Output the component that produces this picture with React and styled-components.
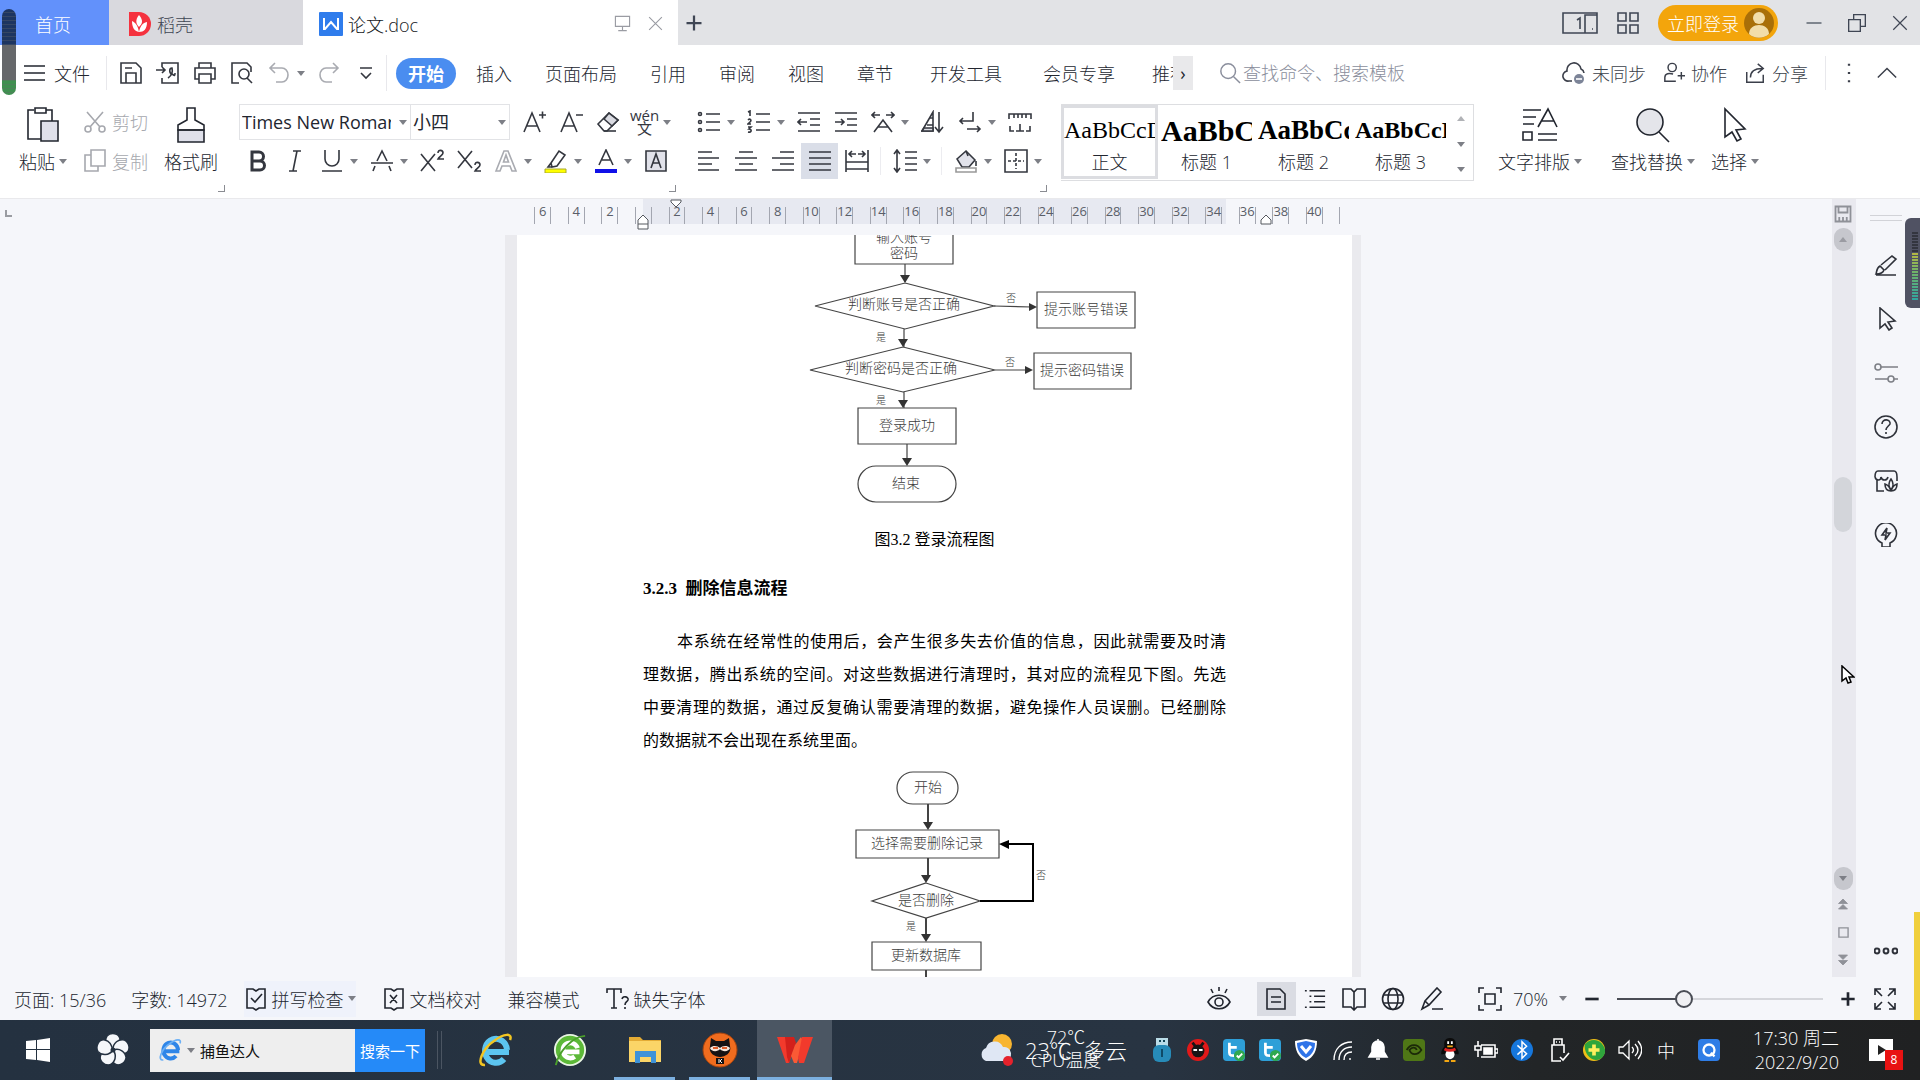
import React, { useState } from "react";
import styled, { createGlobalStyle } from "styled-components";

const GlobalStyle = createGlobalStyle`
  * {
    box-sizing: border-box;
  }
  body {
    margin: 0;
    font-family: "Open Sans", "Noto Sans CJK SC", sans-serif;
    font-size: 18px;
    font-weight: 300;
    color: #22262f;
  }
  button, input, select {
    font: inherit;
    color: inherit;
    border: 0;
    padding: 0;
    margin: 0;
    background: none;
    outline: none;
  }
  svg {
    display: block;
    flex: none;
  }
`;

const Desktop = styled.div`
  position: relative;
  display: flex;
  flex-direction: column;
  height: 100vh;
  overflow: hidden;
  background: #f5f6fa;
  white-space: nowrap;
`;

/* ---------- icons ---------- */

const Drawing = styled.svg`
  fill: none;
  stroke: currentColor;
  stroke-width: ${(p) => p.$weight || 1.6};
`;

const Icon = ({ size = 24, weight, children }) => (
  <Drawing
    width={size}
    height={size}
    viewBox="0 0 24 24"
    $weight={weight}
    aria-hidden="true"
  >
    {children}
  </Drawing>
);

const CaretSvg = styled.svg`
  fill: #7d7f86;
`;

const Caret = () => (
  <CaretSvg width="8" height="5" viewBox="0 0 8 5" aria-hidden="true">
    <path d="M0 0h8L4 5z" />
  </CaretSvg>
);

const icons = {
  save: <path d="M2 2h15l5 5v15H2zM7 22V12h10v10M6 7h7" />,
  exportPdf: (
    <path d="M6 6V2h16v20H6v-5M0 9h9M6 6l3 3-3 3M12 17c3-2 5-6 4-10-3 0-3 5 0 6 3 2 3 2 3-1" />
  ),
  print: <path d="M6 7V2h12v5M6 18H2V7h20v11h-4M6 13h12v9H6z" />,
  preview: (
    <>
      <path d="M9 22H2V2h15l4 4v5" />
      <circle cx="14" cy="13" r="5" />
      <path d="M17 17l5 5" />
    </>
  ),
  undo: <path d="M8 2L3 7l5 5M3 7h12a6 7 0 0 1 0 14H9" />,
  redo: <path d="M16 2l5 5-5 5M21 7H9a6 7 0 0 0 0 14h6" />,
  more: <path d="M6 7h12M7 12l5 5 5-5" />,
  cut: (
    <>
      <circle cx="5" cy="19" r="3" />
      <circle cx="19" cy="19" r="3" />
      <path d="M4 2l13 15M20 2L7 17" />
    </>
  ),
  copy: <path d="M8 1h14v16H8zM8 6H2v16h13v-5" />,
  grow: <path d="M2 22L10 3l8 19M5 16h10M17 5h7M20.500 1.500v7" />,
  shrink: <path d="M2 22L10 3l8 19M5 16h10M17 5h7" />,
  eraser: (
    <>
      <path d="M2 14L13 3l9 7-11 11H8z" />
      <path d="M8 9l8 7 6-6-9-7z" fill="#dadbe2" />
      <path d="M8 21h12" />
    </>
  ),
  bold: (
    <path
      d="M6 3h7a4.500 4.500 0 0 1 0 9H6zM6 12h8a4.500 4.500 0 0 1 0 9H6z"
      strokeWidth="3"
    />
  ),
  italic: <path d="M10 2h8M6 22h8M14 2l-4 20" />,
  underline: <path d="M5 1v9a7 7 0 0 0 14 0V1M2 22h20" />,
  strike: <path d="M7 12l5-10 5 10M1 14h22M5 17l-2 5M19 17l2 5" />,
  sup: (
    <path d="M1 5l14 17M15 5L1 22M18 4c0-4 5-3 5 0 0 2-4 4-5 6h6" />
  ),
  sub: (
    <path d="M1 2l14 17M15 2L1 19M18 16c0-4 5-3 5 0 0 2-4 4-5 6h6" />
  ),
  effect: <path d="M2 22L10 2h4l8 20h-4l-2-5H8l-2 5zM9.500 13h5L12 6z" />,
  highlight: (
    <>
      <path d="M7 14l8-12 6 4-8 11-5 1zM7 14l-3 4h4" />
      <path d="M1 20h21v4H1z" fill="#ffff00" stroke="#a9a92c" strokeWidth="1" />
    </>
  ),
  fontColor: (
    <>
      <path d="M5 16l7-15 7 15M8 11h8" />
      <path d="M1 20h22v4H1z" fill="#1010e8" stroke="none" />
    </>
  ),
  shade: (
    <>
      <path d="M2 2h20v20H2z" fill="#e1e2ea" />
      <path d="M7 19l5-14 5 14M9 14h6" />
    </>
  ),
  bullets: (
    <>
      <circle cx="3" cy="4" r="1.500" />
      <circle cx="3" cy="12" r="1.500" />
      <circle cx="3" cy="20" r="1.500" />
      <path d="M9 4h14M9 12h14M9 20h14" />
    </>
  ),
  numbers: (
    <path d="M9 4h14M9 12h14M9 20h14M1 2l2-1v5M1 10c2-2 4 0 2 2l-2 2h3M1 17h3l-2 2c3 0 3 4-1 3" />
  ),
  outdent: <path d="M1 3h22M13 9h10M13 15h10M1 21h22M1 12h9M4 9l-3 3 3 3" />,
  indent: <path d="M1 3h22M13 9h10M13 15h10M1 21h22M1 12h9M7 9l3 3-3 3" />,
  scale: (
    <path d="M3 22l9-12 9 12M7 17h10M1 5h8M4 2L1 5l3 3M23 5h-8M20 2l3 3-3 3" />
  ),
  sort: (
    <>
      <path d="M1 21L12 2v19z" />
      <path d="M6 15h6M3 18h9v3H1z" fill="#dadbe2" />
      <path d="M18 2v19M14 17l4 5 4-5M9 8h3" />
    </>
  ),
  wrap: <path d="M15 2v9H2M5 8l-3 3 3 3M9 19h13M19 16l3 3-3 3" />,
  tabs: <path d="M1 9V4h22v5M6 4v4M10 4v4M14 4v4M18 4v4M2 16v5h4M22 16v5h-4M12 14v7M8 21h8" />,
  left: <path d="M1 3h14M1 9h21M1 15h14M1 21h21" />,
  center: <path d="M5 3h14M1 9h22M5 15h14M1 21h22" />,
  right: <path d="M9 3h14M1 9h22M9 15h14M1 21h22" />,
  justify: <path d="M1 3h22M1 9h22M1 15h22M1 21h22" />,
  distribute: (
    <path d="M1 1v22M23 1v22M4 5h7M7 2L4 5l3 3M20 5h-7M17 2l3 3-3 3M1 13h22M1 20h22" />
  ),
  spacing: <path d="M4 1v22M1 5l3-4 3 4M1 19l3 4 3-4M12 3h12M12 9h12M12 15h12M12 21h12" />,
  fill: (
    <>
      <path d="M3 10l9-8 9 9-6 7H8z" fill="#e1e2ea" />
      <path d="M12 2l2 5M22 12v5" />
      <path d="M2 19h20v4H2z" stroke="#999" />
    </>
  ),
  borders: (
    <>
      <path d="M1 1h22v22H1z" />
      <path d="M12 4v16M4 12h16" strokeDasharray="3 2" />
    </>
  ),
  search: (
    <>
      <circle cx="10" cy="10" r="8" />
      <path d="M16 16l7 7" />
    </>
  ),
  cloud: (
    <>
      <path d="M10 20H7a5 5 0 0 1-2-10 7 7 0 0 1 14-2 5 5 0 0 1 3 4" />
      <circle cx="17" cy="18" r="5" fill="#7c8498" stroke="none" />
      <path d="M14 18h6" stroke="#fff" />
    </>
  ),
  people: (
    <>
      <circle cx="10" cy="6" r="4.500" />
      <path d="M14 21H2v-4c0-5 5-5 9-4M16 15h8M20 11v8" />
    </>
  ),
  share: <path d="M3 11v11h18v-8M7 17c0-7 4-10 13-10M15 2l6 5-6 5" />,
  brush: (
    <path d="M2 22h20M2 21c1-2 0-6 4-8l4 4c-1 3-4 4-8 4zM7 12L18 3l4 3-11 11" />
  ),
  pointer: <path d="M6 1v20l5-4 4 6 3-2-4-6 7-1z" />,
  sliders: (
    <>
      <circle cx="4" cy="6" r="3" />
      <circle cx="17" cy="18" r="3" />
      <path d="M7 6h17M1 18h13M20 18h4" />
    </>
  ),
  help: (
    <>
      <circle cx="12" cy="12" r="11" />
      <path d="M8 9c0-6 9-5 8 0-1 2-4 3-4 6M12 17v2" />
    </>
  ),
  shop: (
    <path d="M3 10v12h7M1 8c0-3 1-6 3-6h16c2 0 3 3 3 6v4M1 8c1 4 6 4 6 0 1 4 6 4 7 0M17 10c3 4 3 7 0 11-3-4-3-7 0-11zM11 15c4 1 5 4 6 7-4 0-6-3-6-7zM23 15c-4 1-5 4-6 7 4 0 6-3 6-7z" />
  ),
  idea: (
    <path d="M8 24v-4a10.500 10.500 0 1 1 8 0v4zM13 5l-5 7h4l-1 5 5-7h-4z" />
  ),
  spell: <path d="M3 2h6l3 2 3-2h6v19h-6l-3 2-3-2H3zM7 11l4 4 7-8" />,
  proof: <path d="M3 2h6l3 2 3-2h6v19h-6l-3 2-3-2H3zM8 8l7 8M15 8l-7 8" />,
  missing: (
    <path d="M1 6V2h14v4M8 2v19M5 21h6M16 12c1-4 7-2 6 1-1 2-3 2-3 5M19 20v2" />
  ),
  eye: (
    <>
      <path d="M1 15c5-9 17-9 22 0-5 9-17 9-22 0z" />
      <circle cx="12" cy="15" r="4" />
      <path d="M12 0v4M4 2l2 4M20 2l-2 4" />
    </>
  ),
  page: <path d="M3 2h13l5 5v15H3zM7 10h10M7 15h10" />,
  outline: (
    <path d="M6 3h17M11 9h12M11 15h12M6 21h17M1 3h2M6 9h2M6 15h2M1 21h2" />
  ),
  book: <path d="M1 2h8l3 3 3-3h8v18h-8l-3 3-3-3H1zM12 5v18" />,
  globe: (
    <>
      <circle cx="12" cy="12" r="10.500" />
      <ellipse cx="12" cy="12" rx="5" ry="10.500" />
      <path d="M2 8h20M2 16h20" />
    </>
  ),
  pen: <path d="M2 22l3-8L17 1l4 4L9 18zM5 14l4 4M12 22h11" />,
  fit: <path d="M7 7h10v10H7zM6 1H1v5M18 1h5v5M6 23H1v-5M18 23h5v-5" />,
  full: (
    <path d="M9 9L2 2M2 8V2h6M15 9l7-7M16 2h6v6M9 15l-7 7M2 16v6h6M15 15l7 7M22 16v6h-6" />
  ),
  minus: <path d="M2 12h20" strokeWidth="4" />,
  plus: <path d="M2 12h20M12 2v20" strokeWidth="4" />,
  close: <path d="M3 3l18 18M21 3L3 21" />,
  restore: <path d="M2 8h14v14H2zM8 8V2h14v14h-6" />,
  line: <path d="M2 12h20" />,
  apps: <path d="M2 2h8v8H2zM14 2h8v8h-8zM2 14h8v8H2zM14 14h8v8h-8z" />,
  monitor: <path d="M2 2h20v14H2zM12 16v6M6 22h12" />,
  up: <path d="M2 17L12 7l10 10" />,
  dots: <path d="M12 2v2M12 11v2M12 20v2" strokeWidth="2.500" />,
};

/* ---------- title bar ---------- */

const TitleBar = styled.header`
  display: flex;
  align-items: center;
  height: 45px;
  flex: none;
  background: #e2e3e6;
  color: #3f4654;
`;

const Tab = styled.button`
  display: flex;
  align-items: center;
  gap: 5px;
  height: 45px;
  width: ${(p) => p.$width}px;
  padding: 2px 14px 0 ${(p) => p.$indent || 16}px;
  background: ${(p) => p.$bg};
  color: ${(p) => p.$color};
`;

const TabTools = styled.span`
  display: flex;
  gap: 16px;
  margin-left: auto;
  color: #9a9ca3;
`;

const AddTab = styled.button`
  width: 32px;
  display: grid;
  place-items: center;
`;

const WindowTools = styled.div`
  display: flex;
  align-items: center;
  gap: 18px;
  margin-left: auto;
  padding-right: 11px;
`;

const WindowButtons = styled.div`
  display: flex;
  align-items: center;
  gap: 24px;
  padding-left: 9px;
`;

const PlainButton = styled.button`
  display: flex;
  align-items: center;
  gap: ${(p) => p.$gap || 6}px;
`;

const Login = styled.button`
  display: flex;
  align-items: center;
  gap: 5px;
  height: 36px;
  padding: 0 4px 0 9px;
  border-radius: 18px;
  background: #f3a50c;
  color: #fff;
`;

/* ---------- menu row ---------- */

const MenuBar = styled.nav`
  display: flex;
  align-items: center;
  height: 53px;
  flex: none;
  padding: 3px 22px 0 24px;
  background: #fff;
`;

const FileButton = styled(PlainButton)`
  width: 83px;
  height: 34px;
  gap: 9px;
  border-right: 1px solid #e8e8ec;
`;

const QuickBar = styled.div`
  display: flex;
  padding: 0 2px 0 5px;
  border-right: 1px solid #e8e8ec;
`;

const ToolButton = styled.button`
  display: flex;
  align-items: center;
  width: ${(p) => (p.$caret ? 50 : 37)}px;
  height: 36px;
  color: ${(p) => (p.$muted ? "#a9abb1" : "#34373f")};
  background: ${(p) => (p.$on ? "#dadee8" : "none")};
`;

const ToolFace = styled.span`
  display: flex;
  justify-content: center;
  width: 37px;
`;

const MenuList = styled.div`
  display: flex;
  align-items: center;
  gap: 33px;
  margin-left: 20px;
`;

const MenuItem = styled.button`
  padding: 0 ${(p) => (p.$wide ? 4 : 0)}px;
`;

const ActiveMenu = styled.button`
  width: 60px;
  height: 31px;
  margin-left: 9px;
  border-radius: 16px;
  background: #4a8df0;
  color: #fff;
  font-weight: 700;
`;

const CutMenu = styled.button`
  width: 21px;
  overflow: hidden;
  text-align: left;
`;

const ScrollMenu = styled.button`
  width: 20px;
  height: 34px;
  background: #e9e9eb;
  font-weight: 400;
  line-height: 30px;
`;

const Finder = styled.label`
  display: flex;
  align-items: center;
  gap: 2px;
  flex: 1;
  margin-left: 26px;
  color: #8a8e9c;

  input {
    flex: 1;
    min-width: 0;
  }
  input::placeholder {
    color: #8a8e9c;
    opacity: 1;
  }
`;

const MenuRight = styled.div`
  display: flex;
  align-items: center;
  gap: 17px;
  color: #3b3f4a;
`;

const MenuEnd = styled.div`
  display: flex;
  align-items: center;
  gap: 16px;
  height: 34px;
  padding-left: 12px;
  border-left: 1px solid #e8e8ec;
`;

/* ---------- ribbon ---------- */

const Ribbon = styled.section`
  display: flex;
  align-items: flex-start;
  height: 101px;
  flex: none;
  padding: 6px 0 0 19px;
  gap: 14px;
  background: #fff;
  border-bottom: 1px solid #e9e9ec;
`;

const Group = styled.div`
  display: flex;
  flex-direction: column;
  gap: 3px;
`;

const ToolRow = styled.div`
  display: flex;
  align-items: center;
  height: 36px;
`;

const Corner = styled.i`
  align-self: flex-end;
  width: 7px;
  height: 7px;
  margin-top: 3px;
  border: solid #8a8c92;
  border-width: 0 1px 1px 0;
`;

const Separator = styled.i`
  width: 1px;
  height: 28px;
  margin: 0 5px;
  background: #ececf0;
`;

const Clipboard = styled.div`
  display: flex;
  gap: 16px;
  padding-right: 7px;
`;

const BigButton = styled.button`
  display: flex;
  flex-direction: column;
  align-items: center;
  height: 75px;
  padding-top: 3px;
`;

const BigLabel = styled.span`
  display: flex;
  align-items: center;
  gap: 4px;
  height: 36px;
`;

const MutedButton = styled.button`
  display: flex;
  align-items: center;
  gap: 5px;
  height: 36px;
  color: #a6a8ae;
`;

const FontBox = styled.label`
  display: flex;
  align-items: center;
  gap: 8px;
  width: ${(p) => p.$width}px;
  height: 36px;
  padding: 0 3px 0 2px;
  border: solid #e2e3e6;
  border-width: 1px 1px 1px 0;

  &:first-child {
    border-left-width: 1px;
  }
  select {
    flex: 1;
    min-width: 0;
    height: 34px;
    appearance: none;
    overflow: hidden;
    font-weight: 400;
  }
`;

const FontTools = styled.div`
  display: flex;
  margin-left: 5px;
`;

const Pinyin = styled.span`
  display: flex;
  flex-direction: column;
  align-items: center;
  font-size: 15px;
  line-height: 13px;
  font-weight: 400;
`;

const StyleGallery = styled.div`
  display: flex;
  height: 77px;
  border: solid #dddee1;
  border-width: 1px 1px 1px 0;
`;

const StyleCard = styled.button`
  width: 97px;
  height: 74px;
  overflow: hidden;
  border: ${(p) => (p.$on ? "3px solid #dcdde1" : "0")};
  padding: ${(p) => (p.$on ? 0 : "3px 3px")};
`;

const Sample = styled.span`
  display: block;
  overflow: hidden;
  height: 40px;
  line-height: 43px;
  text-align: left;
  color: #000;
  font-family: "Liberation Serif", serif;
  font-size: ${(p) => p.$size}px;
  font-weight: ${(p) => (p.$bold ? 700 : 400)};
`;

const StyleName = styled.span`
  display: block;
  line-height: 27px;
`;

const GalleryArrows = styled.div`
  display: flex;
  flex-direction: column;
  justify-content: space-between;
  align-items: center;
  width: 24px;
  padding: 11px 0 8px;
`;

const Flip = styled.span`
  display: block;
  transform: rotate(180deg);
  opacity: 0.6;
`;

const RibbonEnd = styled.div`
  display: flex;
  gap: ${(p) => p.$gap}px;
  padding-left: ${(p) => p.$inset || 0}px;
`;

/* ---------- workspace ---------- */

const Workspace = styled.main`
  display: flex;
  flex: 1;
  min-height: 0;
`;

const Canvas = styled.div`
  display: flex;
  flex-direction: column;
  align-items: center;
  flex: 1;
  min-width: 0;
  padding-left: 37px;
  position: relative;
`;

const TabMark = styled.i`
  position: absolute;
  left: 5px;
  top: 11px;
  width: 7px;
  height: 7px;
  border: solid #9a9ca2;
  border-width: 0 0 2px 2px;
`;

const Ruler = styled.div`
  position: relative;
  display: flex;
  align-items: flex-end;
  width: 835px;
  height: 25px;
  margin-bottom: 11px;
  padding: 0 12px 0 9px;
  flex: none;
  background: linear-gradient(
    90deg,
    transparent 126px,
    #e7e9f1 126px,
    #e7e9f1 709px,
    transparent 709px
  );
`;

const RulerCell = styled.span`
  display: flex;
  justify-content: center;
  flex: 1;
  height: 17px;

  span {
    display: flex;
    justify-content: center;
    width: 50%;
    border: solid #a3a6b0;
    border-width: 0 1px;
    font-size: 13px;
    line-height: 9px;
    font-weight: 400;
    color: #5a5e68;
  }
`;

const RulerEnd = styled.i`
  width: 9px;
  height: 17px;
  border-right: 1px solid #a3a6b0;
`;

const RulerMark = styled.svg`
  position: absolute;
  left: ${(p) => p.$left}px;
  top: ${(p) => p.$top}px;
  fill: #fff;
  stroke: #55585f;
`;

const Page = styled.article`
  flex: 1;
  min-height: 0;
  width: 835px;
  padding: 0 126px;
  overflow: hidden;
  background: #fff;
  box-shadow: -12px 0 0 #eaeaee, 9px 0 0 #eaeaee;
  color: #000;
  font-family: "Liberation Serif", "Noto Sans CJK SC", serif;
  font-size: 16px;
  font-weight: 400;
`;

const Flow = styled.svg`
  fill: none;
  stroke: #444;
  stroke-width: 1.2;

  text {
    fill: #3c3c3c;
    stroke: none;
    font-size: 14px;
    font-weight: 300;
    text-anchor: middle;
  }
  .small {
    font-size: 10px;
  }
  .head {
    fill: #333;
    stroke: none;
  }
  .loop {
    stroke: #000;
    stroke-width: 2;
  }
`;

const Caption = styled.p`
  margin: 0;
  text-align: center;
  line-height: 40px;
`;

const Heading = styled.h3`
  margin: 9px 0 16px;
  font-size: 17px;
  font-weight: 700;
  line-height: 40px;
`;

const Paragraph = styled.p`
  margin: 0 0 8px;
  line-height: 33px;
`;

const Line = styled.span`
  display: block;
  padding-left: ${(p) => (p.$first ? 34 : 0)}px;
  text-align: justify;
  text-align-last: ${(p) => (p.$last ? "left" : "justify")};
`;

const ScrollBar = styled.div`
  display: flex;
  flex-direction: column;
  align-items: center;
  width: 24px;
  padding: 1px 2px 3px 0;
  background: #e9e9ef;
`;

const Track = styled.div`
  flex: 1;
  width: 18px;
  padding-top: 226px;
`;

const Thumb = styled.div`
  height: 55px;
  border-radius: 9px;
  background: #d3d5da;
`;

const Knob = styled.button`
  display: grid;
  place-items: center;
  width: 19px;
  height: ${(p) => (p.$round ? 23 : 28)}px;
  border-radius: 9px;
  color: #8f9198;
  background: ${(p) => (p.$round ? "#c6c7cd" : "none")};
`;

const SideRail = styled.aside`
  display: flex;
  flex-direction: column;
  align-items: center;
  width: 64px;
  padding: 16px 4px 14px 0;
  color: #2f323a;
`;

const Grip = styled.i`
  width: 32px;
  height: 6px;
  margin-bottom: 32px;
  border: solid #d2d3d8;
  border-width: 1px 0;
`;

const RailButton = styled.button`
  height: 24px;
  margin-bottom: 30px;
  opacity: ${(p) => (p.$muted ? 0.6 : 1)};

  &:last-child {
    margin: auto 0 0;
  }
`;

/* ---------- status bar ---------- */

const StatusBar = styled.footer`
  display: flex;
  align-items: center;
  height: 43px;
  flex: none;
  padding: 0 23px 0 14px;
  background: #f5f6fa;
`;

const StatusLeft = styled.div`
  display: flex;
  align-items: center;
  gap: ${(p) => p.$gap}px;
`;

const StatusButton = styled(PlainButton)`
  height: 36px;
  gap: 4px;
  background: ${(p) => (p.$tinted ? "#eff2fb" : "none")};
`;

const StatusViews = styled.div`
  display: flex;
  margin-left: auto;
`;

const ViewButton = styled.button`
  display: grid;
  place-items: center;
  width: ${(p) => (p.$wide ? 76 : 39)}px;
  height: 34px;
  background: ${(p) => (p.$on ? "#dadce3" : "none")};
`;

const Zoom = styled.div`
  display: flex;
  align-items: center;
  gap: 17px;
  margin-left: 26px;

  input {
    width: 206px;
    height: 20px;
    appearance: none;
    background: linear-gradient(90deg, #4a4d55 33%, #d5d6db 33%) center / 100%
      2px no-repeat;
  }
  input::-webkit-slider-thumb {
    appearance: none;
    width: 18px;
    height: 18px;
    border: 2px solid #4a4d55;
    border-radius: 50%;
    background: #f0f0f3;
  }
`;

/* ---------- taskbar ---------- */

const TaskBar = styled.footer`
  display: flex;
  align-items: center;
  height: 60px;
  flex: none;
  background: linear-gradient(90deg, #243140 0%, #283442 60%, #222527 80%, #202122 100%);
  color: #fff;
`;

const AppButton = styled.button`
  display: grid;
  place-items: center;
  width: 75px;
  height: 60px;
  background: ${(p) => (p.$on ? "#4b5663" : "none")};

  &::after {
    content: "";
    grid-area: 1 / 1;
    align-self: end;
    width: ${(p) => (p.$on ? 75 : 61)}px;
    height: 3px;
    background: ${(p) => (p.$open ? "#7cb0e0" : "none")};
  }
  svg {
    grid-area: 1 / 1;
  }
`;

const TaskSearch = styled.form`
  display: flex;
  align-items: center;
  width: 275px;
  height: 43px;
  margin: 0 20px 0 0;
  background: #eee;
  color: #111;
  font-size: 15px;
  font-weight: 400;

  label {
    display: flex;
    align-items: center;
    flex: 1;
    min-width: 0;
    gap: 5px;
    padding-left: 8px;
  }
  input {
    flex: 1;
    min-width: 0;
  }
  button {
    width: 70px;
    height: 43px;
    background: #258af8;
    color: #fff;
  }
`;

const AppGrip = styled.i`
  width: 5px;
  height: 38px;
  margin-left: -8px;
  margin-right: 15px;
  border: solid #4b5562;
  border-width: 0 1px;
`;

const Weather = styled.div`
  display: flex;
  align-items: center;
  gap: 12px;
  width: 165px;
  margin-left: auto;
  font-size: 22px;
`;

const Readout = styled.div`
  position: relative;
  line-height: 60px;
`;

const CpuTemp = styled.div`
  position: absolute;
  inset: 6px 20px 0 0;
  text-align: center;
  font-size: 18px;
  line-height: 23px;
`;

const Tray = styled.div`
  display: flex;
  align-items: center;
`;

const TrayItem = styled.button`
  display: grid;
  place-items: center;
  width: 36px;
  height: 40px;

  &:last-child {
    margin-left: 7px;
  }
`;

const Clock = styled.div`
  margin: 0 30px 0 26px;
  text-align: right;
  line-height: 24px;
`;

const Notice = styled.button`
  position: relative;
  width: 34px;
  height: 44px;
  margin-right: 17px;

  b {
    position: absolute;
    right: 0;
    bottom: 2px;
    width: 18px;
    height: 20px;
    background: #e81212;
    font-size: 12px;
    font-weight: 400;
    line-height: 20px;
  }
`;

/* ---------- floating pieces ---------- */

const LeftMeter = styled.div`
  position: absolute;
  left: 2px;
  top: 9px;
  width: 14px;
  height: 86px;
  border-radius: 7px;
  background: repeating-linear-gradient(transparent 0 3px, #66686b55 3px 4px),
    linear-gradient(#1d3561 42%, #66686b 42%, #66686b 82%, #3f9050 82%);
`;

const RightMeter = styled.div`
  position: absolute;
  right: 0;
  top: 218px;
  width: 15px;
  height: 90px;
  padding: 14px 0 0 7px;
  border-radius: 6px 0 0 6px;
  background: #505263;

  i {
    display: block;
    width: 6px;
    height: 68px;
    background: repeating-linear-gradient(transparent 0 2px, #505263 2px 3px),
      linear-gradient(#33353f 30%, #b5b843 31%, #6db36a 60%, #31a5a0);
  }
`;

const YellowEdge = styled.div`
  position: absolute;
  right: 0;
  bottom: 60px;
  width: 6px;
  height: 108px;
  background: #f0cf3c;
`;

const MousePointer = styled.svg`
  position: absolute;
  right: 65px;
  top: 665px;
`;

/* ---------- parts ---------- */

const Tool = ({ name, label, caret, muted, on, children }) => (
  <ToolButton $caret={caret} $muted={muted} $on={on} aria-label={label}>
    <ToolFace>{children || <Icon>{icons[name]}</Icon>}</ToolFace>
    {caret && <Caret />}
  </ToolButton>
);

const DownHead = ({ x, y }) => (
  <path className="head" d={`M${x - 5} ${y - 8}h10l-5 8z`} />
);

const LoginFlow = () => (
  <Flow width="583" height="285" viewBox="643 235 583 285">
    <path d="M855 228v36h98v-36M905 264v18M905 283l89 23-89 23-90-23zM904 329v18M903 347l92 23-92 22-93-22zM904 392v16" />
    <path d="M994 306l38 1M995 370h34M1037 292h98v36h-98zM1034 353h97v36h-97zM858 408h98v36h-98zM907 444v18" />
    <rect x="858" y="466" width="98" height="36" rx="18" />
    <DownHead x={905} y={283} />
    <DownHead x={903} y={347} />
    <DownHead x={903} y={408} />
    <DownHead x={907} y={466} />
    <path className="head" d="M1029 303l8 4-8 4zM1025 366l8 4-8 4z" />
    <text x="904" y="242">输入账号</text>
    <text x="904" y="258">密码</text>
    <text x="904" y="309">判断账号是否正确</text>
    <text x="901" y="373">判断密码是否正确</text>
    <text x="1086" y="314">提示账号错误</text>
    <text x="1082" y="375">提示密码错误</text>
    <text x="907" y="430">登录成功</text>
    <text x="906" y="488">结束</text>
    <text className="small" x="1011" y="302">否</text>
    <text className="small" x="1010" y="366">否</text>
    <text className="small" x="881" y="341">是</text>
    <text className="small" x="881" y="404">是</text>
  </Flow>
);

const DeleteFlow = () => (
  <Flow width="583" height="212" viewBox="643 765 583 212">
    <rect x="897" y="772" width="61" height="32" rx="16" />
    <path d="M856 830h143v28H856zM926 883l54 18-54 17-54-17zM872 942h109v28H872z" />
    <path d="M928 804v20M928 858v20M926 918v20M926 970v10" strokeWidth="2" />
    <path className="loop" d="M980 901h53v-57h-27" />
    <path d="M1009 840l-10 4 10 5z" fill="#000" stroke="none" />
    <DownHead x={928} y={830} />
    <DownHead x={926} y={883} />
    <DownHead x={926} y={942} />
    <text x="928" y="792">开始</text>
    <text x="927" y="848">选择需要删除记录</text>
    <text x="926" y="905">是否删除</text>
    <text x="926" y="960">更新数据库</text>
    <text className="small" x="1041" y="879">否</text>
    <text className="small" x="911" y="930">是</text>
  </Flow>
);

const PasteIcon = () => (
  <Drawing width="34" height="36" viewBox="0 0 34 36">
    <path d="M8 3H2v29h13M20 3h6v11M9 1h11v5H9z" />
    <path d="M15 14h17v20H15z" fill="#dfe0ea" />
  </Drawing>
);

const BrushIcon = () => (
  <Drawing width="30" height="36" viewBox="0 0 30 36">
    <path d="M2 23h26v12H2z" fill="#dfe0ea" />
    <path d="M11 1h8v12l9 5v5H2v-5l9-5z" />
  </Drawing>
);

const TypesetIcon = () => (
  <Drawing width="36" height="36" viewBox="0 0 36 36">
    <path d="M1 3h18M1 10h13M1 17h11M16 20L26 2l9 18M20 14h12M16 27h19M16 33h19M1 25h9v8H1z" />
  </Drawing>
);

const LensIcon = () => (
  <Drawing width="36" height="36" viewBox="0 0 36 36">
    <circle cx="15" cy="15" r="13" fill="#e4e5ea" />
    <path d="M24 25l10 10" />
  </Drawing>
);

const SelectIcon = () => (
  <Drawing width="26" height="36" viewBox="0 0 26 36">
    <path d="M3 2v28l7-5 5 9 4-2-5-9 9-1z" />
  </Drawing>
);

const EdgeLogo = ({ size, main, ring }) => (
  <svg width={size} height={size} viewBox="0 0 36 36" aria-hidden="true">
    <path
      d="M32 20H11M30 18a11 12 0 1 0-3 9"
      fill="none"
      stroke={main}
      strokeWidth="6"
    />
    <path
      d="M8 33C-2 34 6 16 17 9 27 1 36 1 33 8"
      fill="none"
      stroke={ring}
      strokeWidth="2.500"
    />
  </svg>
);

const PetalLogo = () => (
  <svg width="34" height="36" viewBox="-17 -18 34 36" aria-hidden="true">
    {[0, 72, 144, 216, 288].map((turn) => (
      <g key={turn} transform={`rotate(${turn})`}>
        <path
          d="M0 0c-7-2-9-9-6-14 4-4 12-3 13 3 1 5-3 8-7 11z"
          fill="#f5f7fa"
          stroke="#243140"
          strokeWidth="1.500"
        />
      </g>
    ))}
    <circle r="2.500" fill="#243140" />
  </svg>
);

const Tile = ({ bg, round, children }) => (
  <svg width="22" height="24" viewBox="0 0 24 24" aria-hidden="true">
    <rect width="24" height="24" rx={round ? 12 : 4} fill={bg} />
    {children}
  </svg>
);

const tray = [
  ["USB", <svg width="22" height="26" viewBox="0 0 22 26"><path d="M5 1h12v8H5z" fill="#b9dce8" /><path d="M8 4h2M12 4h2" stroke="#145" strokeWidth="2" /><rect x="2" y="8" width="18" height="17" rx="6" fill="#278bb8" /><path d="M11 12v8" stroke="#0f4a66" strokeWidth="2" /></svg>],
  ["录屏", <Tile bg="#e11919" round><circle cx="12" cy="13" r="7" fill="#181515" /><path d="M6 4l4 5M18 4l-4 5" stroke="#181515" strokeWidth="3" /><path d="M7 12h4M13 12h4" stroke="#fff" strokeWidth="2" /></Tile>],
  ["同步", <Tile bg="#2e9fd8"><path d="M7 4v11c0 3 2 3 5 3M7 9h8" stroke="#fff" strokeWidth="3" fill="none" /><circle cx="18" cy="18" r="6" fill="#2fa84f" /><path d="M15 18l2 2 4-4" stroke="#fff" strokeWidth="2" fill="none" /></Tile>],
  ["备份", <Tile bg="#2e9fd8"><path d="M7 4v11c0 3 2 3 5 3M7 9h8" stroke="#fff" strokeWidth="3" fill="none" /><circle cx="18" cy="18" r="6" fill="#2fa84f" /><path d="M15 18l2 2 4-4" stroke="#fff" strokeWidth="2" fill="none" /></Tile>],
  ["卫士", <svg width="24" height="26" viewBox="0 0 24 24"><path d="M1 3l11-2 11 2c0 9-3 16-11 20C4 19 1 12 1 3z" fill="#fff" /><path d="M3 5l9-2 9 2c0 7-3 12-9 15C6 17 3 12 3 5z" fill="#2f74e8" /><path d="M7 8l5 6 5-6" fill="none" stroke="#fff" strokeWidth="3" /></svg>],
  ["网络", <Icon weight={1.4}><path d="M4 22C4 11 11 4 22 4M9 22c0-8 5-13 13-13M14 22c0-5 3-8 8-8M20 20v2" /></Icon>],
  ["通知", <Icon><path d="M3 19l3-5V9a6 6 0 0 1 12 0v5l3 5zM10 21h4M12 1v3" fill="#fff" /></Icon>],
  ["NVIDIA", <Tile bg="#4f7716"><path d="M4 12c4-7 12-7 16 0-4 6-11 6-13 0 3-4 7-3 8 0" fill="none" stroke="#1c2a08" strokeWidth="2" /></Tile>],
  ["QQ", <svg width="22" height="26" viewBox="0 0 24 28"><path d="M12 1c-6 0-7 5-6 9-4 5-4 8-3 9l3-1c1 4 3 6 6 6s5-2 6-6l3 1c1-1 1-4-3-9 1-4 0-9-6-9z" fill="#0b0b0b" /><ellipse cx="12" cy="19" rx="5" ry="5" fill="#fff" /><path d="M6 13c4 2 8 2 12 0" stroke="#e02222" strokeWidth="3" fill="none" /><path d="M9 10h6M6 26h5M13 26h5" stroke="#f3a611" strokeWidth="2" /><path d="M9 6h2M13 6h2" stroke="#fff" strokeWidth="3" /></svg>],
  ["电池", <Icon><path d="M7 7h14v12H7M21 11h3v4h-3M4 3v5M1 8h6v4H1zM4 12v7" /><path d="M10 10h8v6h-8z" fill="#fff" /></Icon>],
  ["蓝牙", <Tile bg="#1677dc" round><path d="M7 7l10 9-5 5V3l5 5-10 9" fill="none" stroke="#fff" strokeWidth="1.6" /></Tile>],
  ["弹出", <Icon><path d="M8 1h8v6H8zM15 23H6V7h12v8M14 19l3 3 6-7M10 4h1M13 4h1" /></Icon>],
  ["加速", <Tile bg="#eebf17" round><path d="M2 6a12 12 0 0 1 20 1A10 10 0 0 1 14 23C6 22 1 14 2 6z" fill="#2fa53c" /><path d="M6 12h12M12 6v12" stroke="#ffef5e" strokeWidth="4" /></Tile>],
  ["音量", <Icon weight={1.3}><path d="M1 9h4l6-6v18l-6-6H1zM14 9c2 2 2 4 0 6M17 6c4 4 4 8 0 12M20 3c5 6 5 12 0 18" /></Icon>],
];

const rulerNumbers = [6, 4, 2, ""].concat(
  Array.from({ length: 20 }, (_, i) => (i + 1) * 2)
);

const menus = ["插入", "页面布局", "引用", "审阅", "视图", "章节", "开发工具", "会员专享"];

const cards = [
  { sample: "AaBbCcDd", size: 24, name: "正文", on: true },
  { sample: "AaBbCc", size: 30, bold: true, name: "标题 1" },
  { sample: "AaBbCc", size: 27, bold: true, name: "标题 2" },
  { sample: "AaBbCcD", size: 24, bold: true, name: "标题 3" },
];

const App = () => {
  const [query, setQuery] = useState("");
  const [webQuery, setWebQuery] = useState("捕鱼达人");
  const [zoom, setZoom] = useState(31);

  return (
    <React.Fragment>
      <GlobalStyle />
      <Desktop>
        <TitleBar>
          <Tab $width={109} $indent={35} $bg="#6291fb" $color="#fff">首页</Tab>
          <Tab $width={194} $indent={19} $bg="#d9d9de" $color="#3f4654">
            <svg width="24" height="24" viewBox="0 0 24 24" aria-hidden="true">
              <path d="M1 0h10a12 12 0 0 1 0 24H1z" fill="#f5323f" />
              <path d="M11 3c5 6 3 9 0 12-3-3-4-7 0-12zM4 9c4 2 6 5 7 11-5-1-7-5-7-11zM19 10c-5 1-7 5-8 10 5 0 8-3 8-10z" fill="#fff" />
            </svg>
            稻壳
          </Tab>
          <Tab $width={375} $bg="#fff" $color="#15171c">
            <svg width="24" height="24" viewBox="0 0 24 24" aria-hidden="true">
              <rect width="24" height="24" rx="1" fill="#2f7cec" />
              <path d="M5 6v11h1l6-7 6 7h1V6" fill="none" stroke="#fff" strokeWidth="2" />
            </svg>
            论文.doc
            <TabTools>
              <Icon size={17}>{icons.monitor}</Icon>
              <Icon size={17}>{icons.close}</Icon>
            </TabTools>
          </Tab>
          <AddTab aria-label="新建"><Icon size={18}><path d="M2 12h20M12 2v20" strokeWidth="3" /></Icon></AddTab>
          <WindowTools>
            <Drawing width="36" height="24" viewBox="0 0 36 24" aria-hidden="true">
              <path d="M1 2h34v20H1zM15 9l3-2v11M23 22V4h12M30 18h1" />
            </Drawing>
            <Icon>{icons.apps}</Icon>
            <Login>
              立即登录
              <svg width="30" height="30" viewBox="0 0 30 30" aria-hidden="true">
                <circle cx="15" cy="15" r="15" fill="#a96f08" />
                <circle cx="15" cy="10" r="6" fill="#f2dda9" />
                <path d="M5 26c0-12 20-12 20 0a15 15 0 0 1-20 0z" fill="#f2dda9" />
              </svg>
            </Login>
            <WindowButtons>
              <PlainButton aria-label="最小化"><Icon size={18}>{icons.line}</Icon></PlainButton>
              <PlainButton aria-label="还原"><Icon size={20}>{icons.restore}</Icon></PlainButton>
              <PlainButton aria-label="关闭"><Icon size={18}>{icons.close}</Icon></PlainButton>
            </WindowButtons>
          </WindowTools>
        </TitleBar>

        <MenuBar>
          <FileButton>
            <Drawing width="21" height="16" viewBox="0 0 21 16"><path d="M0 1h21M0 8h21M0 15h21" /></Drawing>
            文件
          </FileButton>
          <QuickBar>
            <Tool name="save" label="保存" />
            <Tool name="exportPdf" label="输出为PDF" />
            <Tool name="print" label="打印" />
            <Tool name="preview" label="打印预览" />
            <Tool name="undo" label="撤销" caret muted />
            <Tool name="redo" label="恢复" muted />
            <Tool name="more" label="更多" />
          </QuickBar>
          <ActiveMenu>开始</ActiveMenu>
          <MenuList>
            {menus.map((m) => (
              <MenuItem key={m} $wide={m === "开发工具" || m === "会员专享"}>{m}</MenuItem>
            ))}
            <CutMenu>推荐</CutMenu>
          </MenuList>
          <ScrollMenu>›</ScrollMenu>
          <Finder>
            <Icon size={22}>{icons.search}</Icon>
            <input
              value={query}
              onChange={(e) => setQuery(e.target.value)}
              placeholder="查找命令、搜索模板"
            />
          </Finder>
          <MenuRight>
            <PlainButton><Icon>{icons.cloud}</Icon>未同步</PlainButton>
            <PlainButton><Icon size={22}>{icons.people}</Icon>协作</PlainButton>
            <PlainButton><Icon size={22}>{icons.share}</Icon>分享</PlainButton>
            <MenuEnd>
              <Icon size={22}>{icons.dots}</Icon>
              <Icon size={22}>{icons.up}</Icon>
            </MenuEnd>
          </MenuRight>
        </MenuBar>

        <Ribbon>
          <Group>
            <Clipboard>
              <BigButton>
                <PasteIcon />
                <BigLabel>粘贴<Caret /></BigLabel>
              </BigButton>
              <Group>
                <MutedButton><Icon>{icons.cut}</Icon>剪切</MutedButton>
                <MutedButton><Icon>{icons.copy}</Icon>复制</MutedButton>
              </Group>
              <BigButton>
                <BrushIcon />
                <BigLabel>格式刷</BigLabel>
              </BigButton>
            </Clipboard>
            <Corner />
          </Group>

          <Group>
            <ToolRow>
              <FontBox $width={172}>
                <select aria-label="字体"><option>Times New Roman</option></select>
                <Caret />
              </FontBox>
              <FontBox $width={99}>
                <select aria-label="字号"><option>小四</option></select>
                <Caret />
              </FontBox>
              <FontTools>
                <Tool name="grow" label="增大字号" />
                <Tool name="shrink" label="减小字号" />
                <Tool name="eraser" label="清除格式" />
                <Tool label="拼音指南" caret>
                  <Pinyin><span>wén</span><span>文</span></Pinyin>
                </Tool>
              </FontTools>
            </ToolRow>
            <ToolRow>
              <Tool name="bold" label="加粗" />
              <Tool name="italic" label="倾斜" />
              <Tool name="underline" label="下划线" caret />
              <Tool name="strike" label="删除线" caret />
              <Tool name="sup" label="上标" />
              <Tool name="sub" label="下标" />
              <Tool name="effect" label="文字效果" caret muted />
              <Tool name="highlight" label="突出显示" caret />
              <Tool name="fontColor" label="字体颜色" caret />
              <Tool name="shade" label="字符底纹" />
            </ToolRow>
            <Corner />
          </Group>

          <Group>
            <ToolRow>
              <Tool name="bullets" label="项目符号" caret />
              <Tool name="numbers" label="编号" caret />
              <Tool name="outdent" label="减少缩进量" />
              <Tool name="indent" label="增加缩进量" />
              <Tool name="scale" label="中文版式" caret />
              <Tool name="sort" label="排序" />
              <Tool name="wrap" label="显示段落标记" caret />
              <Tool name="tabs" label="制表位" />
            </ToolRow>
            <ToolRow>
              <Tool name="left" label="左对齐" />
              <Tool name="center" label="居中" />
              <Tool name="right" label="右对齐" />
              <Tool name="justify" label="两端对齐" on />
              <Tool name="distribute" label="分散对齐" />
              <Separator />
              <Tool name="spacing" label="行距" caret />
              <Separator />
              <Tool name="fill" label="底纹颜色" caret />
              <Tool name="borders" label="边框" caret />
            </ToolRow>
            <Corner />
          </Group>

          <StyleGallery>
            {cards.map((c) => (
              <StyleCard key={c.name} $on={c.on}>
                <Sample $size={c.size} $bold={c.bold}>{c.sample}</Sample>
                <StyleName>{c.name}</StyleName>
              </StyleCard>
            ))}
            <GalleryArrows>
              <Flip><Caret /></Flip>
              <Caret />
              <Caret />
            </GalleryArrows>
          </StyleGallery>

          <RibbonEnd $gap={29} $inset={10}>
            <BigButton>
              <TypesetIcon />
              <BigLabel>文字排版<Caret /></BigLabel>
            </BigButton>
            <RibbonEnd $gap={16}>
              <BigButton>
                <LensIcon />
                <BigLabel>查找替换<Caret /></BigLabel>
              </BigButton>
              <BigButton>
                <SelectIcon />
                <BigLabel>选择<Caret /></BigLabel>
              </BigButton>
            </RibbonEnd>
          </RibbonEnd>
        </Ribbon>

        <Workspace>
          <Canvas>
            <TabMark />
            <Ruler>
              {rulerNumbers.map((n, i) => (
                <RulerCell key={i}><span>{n}</span></RulerCell>
              ))}
              <RulerEnd />
              <RulerMark $left={120} $top={14} width="12" height="18" viewBox="0 0 12 18">
                <path d="M1 7l5-5 5 5v9H1zM1 11h10" />
              </RulerMark>
              <RulerMark $left={153} $top={0} width="12" height="9" viewBox="0 0 12 9">
                <path d="M1 1h10v2L6 8 1 3z" />
              </RulerMark>
              <RulerMark $left={743} $top={14} width="12" height="12" viewBox="0 0 12 12">
                <path d="M1 7l5-5 5 5v4H1z" />
              </RulerMark>
            </Ruler>
            <Page>
              <LoginFlow />
              <Caption>图3.2 登录流程图</Caption>
              <Heading>3.2.3&ensp;删除信息流程</Heading>
              <Paragraph>
                <Line $first>本系统在经常性的使用后，会产生很多失去价值的信息，因此就需要及时清</Line>
                <Line>理数据，腾出系统的空间。对这些数据进行清理时，其对应的流程见下图。先选</Line>
                <Line>中要清理的数据，通过反复确认需要清理的数据，避免操作人员误删。已经删除</Line>
                <Line $last>的数据就不会出现在系统里面。</Line>
              </Paragraph>
              <DeleteFlow />
            </Page>
          </Canvas>
          <ScrollBar>
            <Knob aria-label="标尺">
              <Icon size={18} weight={2.4}><path d="M2 2h20v20H2zM6 3v7h12V3M7 22v-6M12 22v-6M17 22v-6" /></Icon>
            </Knob>
            <Knob $round aria-label="向上"><Flip><Caret /></Flip></Knob>
            <Track><Thumb /></Track>
            <Knob $round aria-label="向下"><Caret /></Knob>
            <Knob aria-label="上一页"><Icon size={12}><path d="M3 11l9-9 9 9zM3 22l9-9 9 9z" fill="currentColor" /></Icon></Knob>
            <Knob aria-label="选择浏览对象"><Icon size={11} weight={3}><path d="M2 2h20v20H2z" /></Icon></Knob>
            <Knob aria-label="下一页"><Icon size={12}><path d="M3 2l9 9 9-9zM3 13l9 9 9-9z" fill="currentColor" /></Icon></Knob>
          </ScrollBar>
          <SideRail>
            <Grip />
            <RailButton aria-label="样式"><Icon>{icons.brush}</Icon></RailButton>
            <RailButton aria-label="选择窗格"><Icon>{icons.pointer}</Icon></RailButton>
            <RailButton $muted aria-label="属性"><Icon>{icons.sliders}</Icon></RailButton>
            <RailButton aria-label="帮助"><Icon>{icons.help}</Icon></RailButton>
            <RailButton aria-label="资源"><Icon>{icons.shop}</Icon></RailButton>
            <RailButton aria-label="灵感"><Icon>{icons.idea}</Icon></RailButton>
            <RailButton aria-label="更多">
              <Icon weight={2}>
                <circle cx="3" cy="12" r="2.400" />
                <circle cx="12" cy="12" r="2.400" />
                <circle cx="21" cy="12" r="2.400" />
              </Icon>
            </RailButton>
          </SideRail>
        </Workspace>

        <StatusBar>
          <StatusLeft $gap={26}>
            <StatusLeft $gap={25}>
              <span>页面: 15/36</span>
              <StatusLeft $gap={16}>
                <span>字数: 14972</span>
                <StatusButton $tinted><Icon>{icons.spell}</Icon>拼写检查<Caret /></StatusButton>
              </StatusLeft>
            </StatusLeft>
            <StatusButton><Icon>{icons.proof}</Icon>文档校对</StatusButton>
            <span>兼容模式</span>
            <StatusButton><Icon>{icons.missing}</Icon>缺失字体</StatusButton>
          </StatusLeft>
          <StatusViews>
            <ViewButton $wide aria-label="护眼模式"><Icon>{icons.eye}</Icon></ViewButton>
            <ViewButton $on aria-label="页面视图"><Icon>{icons.page}</Icon></ViewButton>
            <ViewButton aria-label="大纲"><Icon size={22}>{icons.outline}</Icon></ViewButton>
            <ViewButton aria-label="阅读版式"><Icon>{icons.book}</Icon></ViewButton>
            <ViewButton aria-label="Web版式"><Icon>{icons.globe}</Icon></ViewButton>
            <ViewButton aria-label="写作模式"><Icon>{icons.pen}</Icon></ViewButton>
          </StatusViews>
          <Zoom>
            <PlainButton $gap={11}><Icon>{icons.fit}</Icon>70%<Caret /></PlainButton>
            <PlainButton aria-label="缩小"><Icon size={16}>{icons.minus}</Icon></PlainButton>
            <input
              type="range"
              aria-label="显示比例"
              value={zoom}
              onChange={(e) => setZoom(e.target.value)}
            />
            <PlainButton aria-label="放大"><Icon size={16}>{icons.plus}</Icon></PlainButton>
            <PlainButton aria-label="全屏"><Icon>{icons.full}</Icon></PlainButton>
          </Zoom>
        </StatusBar>

        <TaskBar>
          <AppButton aria-label="开始">
            <svg width="24" height="24" viewBox="0 0 24 24" fill="#fff">
              <path d="M0 3l10-1v9H0zM11 2l13-2v11H11zM0 12h10v10L0 21zM11 12h13v12l-13-2z" />
            </svg>
          </AppButton>
          <AppButton aria-label="搜狗"><PetalLogo /></AppButton>
          <TaskSearch onSubmit={(e) => e.preventDefault()}>
            <label>
              <EdgeLogo size={24} main="#2f86e8" ring="#6cb0f5" />
              <Caret />
              <input
                aria-label="搜索"
                value={webQuery}
                onChange={(e) => setWebQuery(e.target.value)}
              />
            </label>
            <button type="submit">搜索一下</button>
          </TaskSearch>
          <AppGrip />
          <AppButton aria-label="Internet Explorer"><EdgeLogo size={36} main="#5cc5f0" ring="#f2c522" /></AppButton>
          <AppButton aria-label="360浏览器">
            <svg width="34" height="34" viewBox="0 0 36 36">
              <circle cx="18" cy="18" r="16" fill="#5cb938" stroke="#e9f6e3" strokeWidth="2" />
              <path d="M28 20H11M26 16a8 8 0 1 0-3 9" fill="none" stroke="#fff" strokeWidth="5" />
              <path d="M3 34C6 20 20 4 34 3" fill="none" stroke="#4aa02b" strokeWidth="2" />
            </svg>
          </AppButton>
          <AppButton $open aria-label="文件资源管理器">
            <svg width="34" height="30" viewBox="0 0 34 30">
              <path d="M1 2h11l3 3h18v22H1z" fill="#e4ac35" />
              <path d="M1 6h32v21H1z" fill="#fbd567" />
              <path d="M7 28V16h21v12h-5v-6H12v6z" fill="#3f93d8" />
            </svg>
          </AppButton>
          <AppButton $open aria-label="录屏大师">
            <svg width="36" height="36" viewBox="0 0 36 36">
              <circle cx="18" cy="18" r="17" fill="#f06c1e" stroke="#a3430e" />
              <path d="M9 6l5 3h8l5-3 1 8c2 7-5 11-10 11S6 21 8 14z" fill="#161314" />
              <path d="M8 16c3-3 8-2 10 0 2-2 7-3 10 0-1 4-8 4-10 1-2 3-9 3-10-1z" fill="#f7e6da" />
              <path d="M11 16h5M20 16h5" stroke="#e0602c" strokeWidth="2" />
              <path d="M14 26h8v6h-8z" fill="#161314" />
              <path d="M17 27v4M20 27l-2 2 2 2" stroke="#fff" fill="none" />
            </svg>
          </AppButton>
          <AppButton $on $open aria-label="WPS">
            <svg width="38" height="28" viewBox="0 0 38 28">
              <path d="M1 1h8l7 17-3 9h-3z" fill="#f23a2c" />
              <path d="M9 1h9l2 6-7 20-2-6z" fill="#d3201b" />
              <path d="M19 9l6-8 2 4-6 22h-3l-3-7z" fill="#fa5a35" />
              <path d="M26 1h11l-9 26h-5l-1-5z" fill="#f23a2c" />
            </svg>
          </AppButton>

          <Weather>
            <svg width="34" height="34" viewBox="0 0 34 34">
              <circle cx="23" cy="11" r="10" fill="#f8b530" />
              <path d="M7 28a7 7 0 0 1 0-13 9 9 0 0 1 17-1 7 7 0 0 1 2 14z" fill="#dfe7f4" />
              <circle cx="29" cy="28" r="5" fill="#e5222c" />
            </svg>
            <Readout>
              23℃&ensp;多云
              <CpuTemp>72℃<br />CPU温度</CpuTemp>
            </Readout>
          </Weather>
          <Tray>
            {tray.map(([name, icon]) => (
              <TrayItem key={name} aria-label={name}>{icon}</TrayItem>
            ))}
            <TrayItem>中</TrayItem>
            <TrayItem aria-label="Q">
              <Tile bg="#2f7de6"><circle cx="12" cy="12" r="6" fill="none" stroke="#fff" strokeWidth="2.500" /><path d="M14 15l4 4" stroke="#fff" strokeWidth="2.500" /></Tile>
            </TrayItem>
          </Tray>
          <Clock>17:30 周二<br />2022/9/20</Clock>
          <Notice aria-label="通知中心">
            <svg width="24" height="26" viewBox="0 0 24 26">
              <path d="M0 2h24v22H0z" fill="#fff" />
              <path d="M9 8l8 5-8 5z" fill="#222" />
            </svg>
            <b>8</b>
          </Notice>
        </TaskBar>

        <LeftMeter />
        <RightMeter><i /></RightMeter>
        <YellowEdge />
        <MousePointer width="14" height="20" viewBox="0 0 14 20">
          <path d="M1 1v15l4-3 2 5 3-1-2-5h5z" fill="#fff" stroke="#000" strokeWidth="1.500" />
        </MousePointer>
      </Desktop>
    </React.Fragment>
  );
};

export default App;
